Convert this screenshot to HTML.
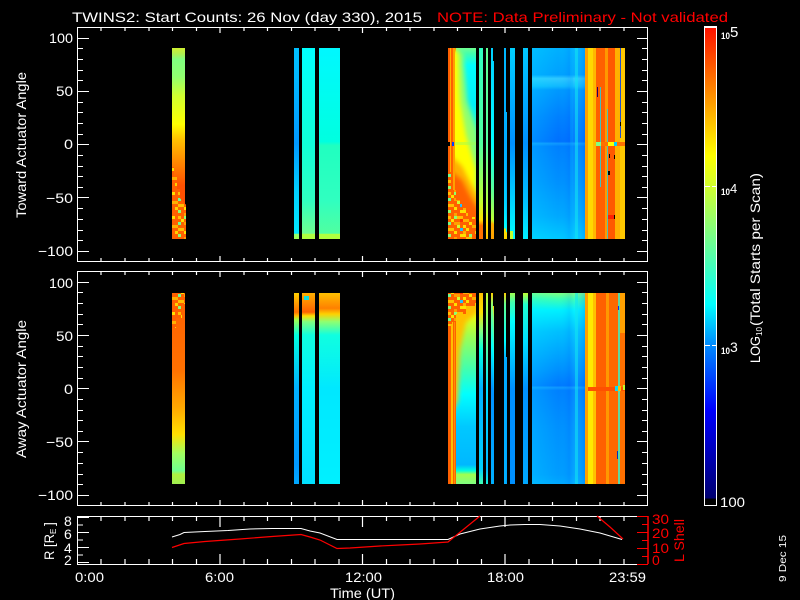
<!DOCTYPE html>
<html>
<head>
<meta charset="utf-8">
<style>
html,body{margin:0;padding:0;background:#000;width:800px;height:600px;overflow:hidden}
svg{display:block}
text{font-family:"Liberation Sans",sans-serif;fill:#fff}
.r{fill:#f00}
.d rect,.d polygon{shape-rendering:crispEdges}
</style>
</head>
<body>
<svg width="800" height="600" viewBox="0 0 800 600" xmlns="http://www.w3.org/2000/svg">
<defs>
<filter id="bl" x="-30%" y="-30%" width="160%" height="160%"><feGaussianBlur stdDeviation="2.5"/></filter>
<clipPath id="cp1"><rect x="455" y="48" width="21" height="191"/></clipPath>
<clipPath id="cp2"><rect x="455" y="293" width="21" height="191"/></clipPath>
<linearGradient id="cb" x1="0" y1="0" x2="0" y2="1">
<stop offset="0" stop-color="#ff1000"/><stop offset=".27" stop-color="#ffff00"/><stop offset=".335" stop-color="#d0ff30"/><stop offset=".58" stop-color="#00ffff"/><stop offset=".66" stop-color="#0090ff"/><stop offset=".8" stop-color="#0000ff"/><stop offset=".985" stop-color="#000070"/><stop offset=".986" stop-color="#000"/>
</linearGradient>
<linearGradient id="a1" x1="0" y1="0" x2="0" y2="1">
<stop offset="0" stop-color="#d0f030"/><stop offset=".03" stop-color="#b0f050"/><stop offset=".06" stop-color="#80ff80"/><stop offset=".15" stop-color="#90ff70"/><stop offset=".25" stop-color="#d0ff30"/><stop offset=".4" stop-color="#ffff00"/><stop offset=".48" stop-color="#ffc000"/><stop offset=".58" stop-color="#ff9000"/><stop offset=".72" stop-color="#ff5000"/><stop offset="1" stop-color="#ff5000"/>
</linearGradient>
<linearGradient id="a2" x1="0" y1="0" x2="0" y2="1">
<stop offset="0" stop-color="#ff6000"/><stop offset=".4" stop-color="#ff7000"/><stop offset=".6" stop-color="#ffa800"/><stop offset=".74" stop-color="#ffe000"/><stop offset=".84" stop-color="#a0ff60"/><stop offset=".93" stop-color="#70ff90"/><stop offset=".95" stop-color="#b0f040"/><stop offset="1" stop-color="#a0f050"/>
</linearGradient>
<linearGradient id="b1" x1="0" y1="0" x2="0" y2="1"><stop offset="0" stop-color="#00c0ff"/><stop offset=".15" stop-color="#00b8ff"/><stop offset=".5" stop-color="#0098ff"/><stop offset=".75" stop-color="#00d0ff"/><stop offset=".97" stop-color="#00e8ff"/><stop offset=".975" stop-color="#90ff70"/><stop offset="1" stop-color="#a0ff50"/></linearGradient>
<linearGradient id="b2" x1="0" y1="0" x2="0" y2="1"><stop offset="0" stop-color="#00ffff"/><stop offset=".5" stop-color="#10ffd8"/><stop offset=".8" stop-color="#30ffc0"/><stop offset=".97" stop-color="#70ff90"/><stop offset=".975" stop-color="#b0ff40"/><stop offset="1" stop-color="#b0ff40"/></linearGradient>
<linearGradient id="b3" x1="0" y1="0" x2="0" y2="1"><stop offset="0" stop-color="#00f8ff"/><stop offset=".49" stop-color="#00ffe0"/><stop offset=".51" stop-color="#20ffc0"/><stop offset=".8" stop-color="#30ffc0"/><stop offset=".97" stop-color="#50ffa0"/><stop offset=".975" stop-color="#b0ff40"/><stop offset="1" stop-color="#b0ff40"/></linearGradient>
<linearGradient id="c1" x1="0" y1="0" x2="0" y2="1"><stop offset="0" stop-color="#ffd000"/><stop offset=".1" stop-color="#ff7000"/><stop offset=".12" stop-color="#ffc000"/><stop offset=".14" stop-color="#a0ff50"/><stop offset=".22" stop-color="#00ffe0"/><stop offset=".5" stop-color="#00b0ff"/><stop offset=".9" stop-color="#0098ff"/><stop offset="1" stop-color="#00a8ff"/></linearGradient>
<linearGradient id="c2" x1="0" y1="0" x2="0" y2="1"><stop offset="0" stop-color="#ffb000"/><stop offset=".1" stop-color="#ff6000"/><stop offset=".12" stop-color="#ffe000"/><stop offset=".15" stop-color="#80ff80"/><stop offset=".22" stop-color="#10ffe0"/><stop offset=".5" stop-color="#00f0ff"/><stop offset="1" stop-color="#00e0ff"/></linearGradient>
<linearGradient id="c3" x1="0" y1="0" x2="0" y2="1"><stop offset="0" stop-color="#ffc000"/><stop offset=".08" stop-color="#ff8000"/><stop offset=".11" stop-color="#ffd000"/><stop offset=".15" stop-color="#90ff70"/><stop offset=".22" stop-color="#10ffe0"/><stop offset=".5" stop-color="#00e8ff"/><stop offset="1" stop-color="#00f0ff"/></linearGradient>

<linearGradient id="e1" x1="0" y1="0" x2="0" y2="1"><stop offset="0" stop-color="#70ff90"/><stop offset=".03" stop-color="#40ffb0"/><stop offset=".09" stop-color="#00ffff"/><stop offset=".3" stop-color="#00f0f8"/><stop offset=".45" stop-color="#40ffb0"/><stop offset=".7" stop-color="#a0ff50"/><stop offset="1" stop-color="#e0ff10"/></linearGradient>
<linearGradient id="e3" x1="0" y1="0" x2="0" y2="1"><stop offset="0" stop-color="#ff9000"/><stop offset=".09" stop-color="#ffff00"/><stop offset=".22" stop-color="#a0ff50"/><stop offset=".4" stop-color="#40ffb0"/><stop offset=".53" stop-color="#00ffff"/><stop offset=".7" stop-color="#00c8ff"/><stop offset=".9" stop-color="#00b8ff"/><stop offset=".93" stop-color="#00ffe0"/><stop offset=".95" stop-color="#a0ff50"/><stop offset="1" stop-color="#80ff80"/></linearGradient>

<linearGradient id="n1" x1="0" y1="0" x2="0" y2="1"><stop offset="0" stop-color="#30ffc0"/><stop offset=".5" stop-color="#50ffa0"/><stop offset=".8" stop-color="#c0ff30"/><stop offset=".9" stop-color="#ffe000"/><stop offset=".93" stop-color="#ff7000"/><stop offset="1" stop-color="#ff7000"/></linearGradient>
<linearGradient id="n2" x1="0" y1="0" x2="0" y2="1"><stop offset="0" stop-color="#60ff90"/><stop offset=".5" stop-color="#50ffa0"/><stop offset=".85" stop-color="#c0ff30"/><stop offset=".92" stop-color="#ffe000"/><stop offset="1" stop-color="#ffc000"/></linearGradient>
<linearGradient id="n3" x1="0" y1="0" x2="0" y2="1"><stop offset="0" stop-color="#00d0ff"/><stop offset=".5" stop-color="#00ffff"/><stop offset=".75" stop-color="#60ff90"/><stop offset=".9" stop-color="#c0ff30"/><stop offset=".92" stop-color="#ffb000"/><stop offset="1" stop-color="#ffa000"/></linearGradient>
<linearGradient id="n4" x1="0" y1="0" x2="0" y2="1"><stop offset="0" stop-color="#00b8ff"/><stop offset=".5" stop-color="#00a8ff"/><stop offset=".8" stop-color="#00d0ff"/><stop offset=".94" stop-color="#00ffff"/><stop offset=".95" stop-color="#ffe000"/><stop offset="1" stop-color="#ffd000"/></linearGradient>
<linearGradient id="n5" x1="0" y1="0" x2="0" y2="1"><stop offset="0" stop-color="#00d0ff"/><stop offset=".5" stop-color="#0090ff"/><stop offset="1" stop-color="#00ffff"/></linearGradient>
<linearGradient id="n6" x1="0" y1="0" x2="0" y2="1"><stop offset="0" stop-color="#00c8ff"/><stop offset=".5" stop-color="#0090ff"/><stop offset=".8" stop-color="#00c0ff"/><stop offset="1" stop-color="#00f0ff"/></linearGradient>

<linearGradient id="m1" x1="0" y1="0" x2="0" y2="1"><stop offset="0" stop-color="#ffc000"/><stop offset=".1" stop-color="#ffe000"/><stop offset=".2" stop-color="#80ff80"/><stop offset=".3" stop-color="#00ffe0"/><stop offset=".5" stop-color="#00b0ff"/><stop offset=".92" stop-color="#00d0ff"/><stop offset="1" stop-color="#40ffb0"/></linearGradient>
<linearGradient id="m2" x1="0" y1="0" x2="0" y2="1"><stop offset="0" stop-color="#c0ff30"/><stop offset=".25" stop-color="#60ff90"/><stop offset=".5" stop-color="#00e0ff"/><stop offset=".92" stop-color="#00b8ff"/><stop offset="1" stop-color="#10f0e0"/></linearGradient>
<linearGradient id="m3" x1="0" y1="0" x2="0" y2="1"><stop offset="0" stop-color="#ffd000"/><stop offset=".06" stop-color="#90ff70"/><stop offset=".28" stop-color="#00ffff"/><stop offset=".5" stop-color="#0090ff"/><stop offset="1" stop-color="#00b0ff"/></linearGradient>
<linearGradient id="m4" x1="0" y1="0" x2="0" y2="1"><stop offset="0" stop-color="#ffd000"/><stop offset=".06" stop-color="#60ff90"/><stop offset=".25" stop-color="#00ffff"/><stop offset=".35" stop-color="#00a8ff"/><stop offset="1" stop-color="#00b0ff"/></linearGradient>
<linearGradient id="m5" x1="0" y1="0" x2="0" y2="1"><stop offset="0" stop-color="#a0ff50"/><stop offset=".05" stop-color="#40ffb0"/><stop offset=".15" stop-color="#00ffff"/><stop offset=".5" stop-color="#0090ff"/><stop offset="1" stop-color="#0090ff"/></linearGradient>
<linearGradient id="m6" x1="0" y1="0" x2="0" y2="1"><stop offset="0" stop-color="#c0ff30"/><stop offset=".06" stop-color="#20ffd0"/><stop offset=".25" stop-color="#00e0ff"/><stop offset=".5" stop-color="#0090ff"/><stop offset="1" stop-color="#00a8ff"/></linearGradient>

<linearGradient id="f1" x1="0" y1="0" x2="0" y2="1">
<stop offset="0" stop-color="#00b0ff"/><stop offset=".14" stop-color="#00a0ff"/><stop offset=".16" stop-color="#30c8ff"/><stop offset=".2" stop-color="#10b8ff"/><stop offset=".22" stop-color="#0098ff"/><stop offset=".36" stop-color="#0080ff"/><stop offset=".49" stop-color="#0070ff"/><stop offset=".5" stop-color="#1098ff"/><stop offset=".515" stop-color="#0080ff"/><stop offset=".7" stop-color="#0090ff"/><stop offset=".88" stop-color="#00a8ff"/><stop offset="1" stop-color="#00c8ff"/>
</linearGradient>
<linearGradient id="f2" x1="0" y1="0" x2="0" y2="1">
<stop offset="0" stop-color="#80ff80"/><stop offset=".03" stop-color="#40ffb0"/><stop offset=".09" stop-color="#00f0ff"/><stop offset=".2" stop-color="#00c0ff"/><stop offset=".4" stop-color="#0090ff"/><stop offset=".485" stop-color="#0078ff"/><stop offset=".495" stop-color="#1098ff"/><stop offset=".51" stop-color="#0080ff"/><stop offset=".7" stop-color="#0090ff"/><stop offset=".95" stop-color="#009cff"/><stop offset="1" stop-color="#00a8ff"/>
</linearGradient>
<linearGradient id="h1" x1="0" y1="0" x2="1" y2="0"><stop offset="0" stop-color="#00ffff" stop-opacity=".2"/><stop offset=".5" stop-color="#00ffff" stop-opacity="0"/><stop offset=".7" stop-color="#0040ff" stop-opacity=".1"/><stop offset=".8" stop-color="#40ffff" stop-opacity=".1"/><stop offset="1" stop-color="#0060ff" stop-opacity=".25"/></linearGradient>

<pattern id="nz" x="448" y="0" width="30" height="24" patternUnits="userSpaceOnUse">
<rect width="30" height="24" fill="#ff6000"/>
<rect x="0" y="0" width="3" height="3" fill="#ffc000"/><rect x="6" y="0" width="3" height="3" fill="#90ff70"/><rect x="9" y="0" width="6" height="3" fill="#ffc000"/><rect x="24" y="0" width="3" height="3" fill="#ffe000"/>
<rect x="3" y="3" width="3" height="3" fill="#ffe000"/><rect x="12" y="3" width="3" height="3" fill="#ff3000"/><rect x="15" y="3" width="6" height="3" fill="#ffb000"/>
<rect x="0" y="6" width="3" height="3" fill="#70ff90"/><rect x="6" y="6" width="6" height="3" fill="#ffa000"/><rect x="21" y="6" width="3" height="3" fill="#ffe000"/>
<rect x="9" y="9" width="3" height="3" fill="#d0ff30"/><rect x="15" y="9" width="3" height="3" fill="#ffe000"/><rect x="24" y="9" width="6" height="3" fill="#ffb000"/>
<rect x="0" y="12" width="6" height="3" fill="#ffc000"/><rect x="12" y="12" width="3" height="3" fill="#20c0ff"/><rect x="18" y="12" width="3" height="3" fill="#ffe000"/>
<rect x="6" y="15" width="3" height="3" fill="#ffe000"/><rect x="15" y="15" width="3" height="3" fill="#ffb000"/><rect x="27" y="15" width="3" height="3" fill="#ffd000"/>
<rect x="0" y="18" width="3" height="3" fill="#90ff70"/><rect x="12" y="18" width="6" height="3" fill="#ffe000"/><rect x="21" y="18" width="3" height="3" fill="#90ff70"/>
<rect x="6" y="21" width="3" height="3" fill="#ffa000"/><rect x="18" y="21" width="6" height="3" fill="#ffc000"/>
</pattern>

<g id="ticks" fill="none" stroke="#fff" stroke-width="1">
<rect x="77.5" y=".5" width="570" height="234"/>
<path d="M78 11.5H89M78 64.5H89M78 117.5H89M78 170.5H89M78 224.5H89M78 21.5H83M78 32.5H83M78 43.5H83M78 53.5H83M78 75.5H83M78 85.5H83M78 96.5H83M78 107.5H83M78 128.5H83M78 139.5H83M78 149.5H83M78 160.5H83M78 181.5H83M78 192.5H83M78 203.5H83M78 213.5H83"/>
<path d="M637 11.5H648M637 64.5H648M637 117.5H648M637 170.5H648M637 224.5H648M642 21.5H648M642 32.5H648M642 43.5H648M642 53.5H648M642 75.5H648M642 85.5H648M642 96.5H648M642 107.5H648M642 128.5H648M642 139.5H648M642 149.5H648M642 160.5H648M642 181.5H648M642 192.5H648M642 203.5H648M642 213.5H648"/>
<path stroke-width="1.2" d="M101 1v3M125 1v3M149 1v3M172.500 1v3M196.500 1v3M220 1v5M244 1v3M267.500 1v3M291.500 1v3M315 1v3M339 1v3M362.500 1v5M386.500 1v3M410 1v3M434 1v3M457.500 1v3M481.500 1v3M505 1v5M529 1v3M552.500 1v3M576.500 1v3M600 1v3M624 1v3"/>
<path stroke-width="1.2" d="M101 234v-3M125 234v-3M149 234v-3M172.500 234v-3M196.500 234v-3M220 234v-5M244 234v-3M267.500 234v-3M291.500 234v-3M315 234v-3M339 234v-3M362.500 234v-5M386.500 234v-3M410 234v-3M434 234v-3M457.500 234v-3M481.500 234v-3M505 234v-5M529 234v-3M552.500 234v-3M576.500 234v-3M600 234v-3M624 234v-3"/>
</g>
</defs>

<rect width="800" height="600" fill="#000"/>

<!-- Panel 1 data -->
<g class="d">
<rect x="172" y="48" width="13" height="191" fill="url(#a1)"/>
<polygon points="172,167 174,167 174,177 177,177 177,189 180,189 180,198 186,205 186,239 172,239" fill="url(#nz)"/>
<rect x="294" y="48" width="5" height="191" fill="url(#b1)"/>
<rect x="302" y="48" width="13" height="191" fill="url(#b2)"/>
<rect x="319" y="48" width="21" height="191" fill="url(#b3)"/>

<rect x="448" y="48" width="8" height="191" fill="#ff6000"/>
<rect x="450" y="48" width="1" height="191" fill="#ffb000"/>
<rect x="453" y="48" width="2" height="191" fill="#ffa000"/>
<rect x="456" y="48" width="20" height="191" fill="url(#e1)"/>
<g clip-path="url(#cp1)">
<polygon points="450,52 463,52 467,100 476,130 480,190 450,190" fill="#90ff70" filter="url(#bl)"/>
<polygon points="450,50 458,50 460,100 466,135 476,170 476,200 450,190" fill="#ffff00" filter="url(#bl)"/>
<polygon points="450,155 462,166 470,182 480,200 480,240 450,240" fill="#ffb000" filter="url(#bl)"/>
<polygon points="450,170 462,180 470,196 480,212 480,240 450,240" fill="#ff6000" filter="url(#bl)"/>
</g>
<polygon points="448,172 451,172 451,190 456,190 456,200 462,200 462,208 468,208 468,217 476,217 476,239 448,239" fill="url(#nz)"/>
<rect x="448" y="142" width="2" height="4" fill="#000"/><rect x="452" y="142" width="2" height="4" fill="#0040ff"/>
<rect x="455" y="142" width="21" height="3" fill="#a0ff50" opacity=".5"/>

<rect x="479" y="48" width="4" height="191" fill="url(#n1)"/>
<rect x="486" y="48" width="2" height="191" fill="url(#n2)"/>
<rect x="491" y="48" width="2" height="191" fill="url(#n3)"/><rect x="493" y="61" width="1" height="178" fill="url(#n3)"/>
<rect x="504" y="48" width="2" height="191" fill="url(#n4)"/><rect x="506" y="112" width="1" height="127" fill="url(#n4)"/>
<rect x="510" y="48" width="5" height="191" fill="url(#n5)"/><rect x="510" y="231" width="3" height="8" fill="#c0ff30"/>
<rect x="523" y="48" width="5" height="191" fill="url(#n6)"/>

<rect x="532" y="48" width="53" height="191" fill="url(#f1)"/>
<rect x="532" y="48" width="53" height="191" fill="url(#h1)"/>
<rect x="570" y="48" width="3" height="191" fill="#00c0ff" opacity=".2"/>
<rect x="575" y="48" width="3" height="191" fill="#10e8f0" opacity=".55"/>

<rect x="585" y="48" width="3" height="191" fill="#ffa000"/>
<rect x="588" y="48" width="5" height="191" fill="#ffd800"/>
<rect x="593" y="48" width="3" height="191" fill="#ffb800"/>
<rect x="596" y="48" width="9" height="191" fill="#ff6000"/>
<rect x="605" y="48" width="3" height="191" fill="#ff9800"/>
<rect x="608" y="48" width="7" height="191" fill="#ff5800"/>
<rect x="615" y="48" width="5" height="191" fill="#ffb000"/>
<rect x="620" y="48" width="5" height="191" fill="#ffc800"/>
<rect x="600" y="87" width="1" height="100" fill="#40c0c0"/><rect x="607" y="109" width="1" height="130" fill="#50c0b0"/>
<rect x="597" y="87" width="1" height="10" fill="#200060"/><rect x="620" y="48" width="1" height="90" fill="#2050d0"/><rect x="620" y="122" width="1" height="4" fill="#000"/>
<rect x="596" y="142" width="29" height="4" fill="#ff7000"/><rect x="596" y="142" width="5" height="4" fill="#80ff80"/><rect x="608" y="142" width="6" height="4" fill="#ffff00"/><rect x="614" y="142" width="3" height="4" fill="#00d0ff"/>
<rect x="609" y="154" width="1" height="4" fill="#000"/><rect x="614" y="155" width="1" height="4" fill="#000"/><rect x="608" y="171" width="2" height="4" fill="#000"/><rect x="608" y="215" width="7" height="4" fill="#ff2000"/><rect x="614" y="215" width="1" height="4" fill="#000"/>
</g>

<!-- Panel 2 data -->
<g class="d">
<rect x="172" y="293" width="13" height="191" fill="url(#a2)"/>
<polygon points="172,293 185,293 185,304 182,304 182,318 176,318 176,328 172,328" fill="url(#nz)"/>
<rect x="294" y="293" width="5" height="191" fill="url(#c1)"/>
<rect x="302" y="293" width="13" height="191" fill="url(#c2)"/>
<rect x="319" y="293" width="21" height="191" fill="url(#c3)"/>
<rect x="304" y="296" width="5" height="4" fill="#10e0e0"/>

<rect x="456" y="293" width="20" height="191" fill="url(#e3)"/>
<g clip-path="url(#cp2)">
<polygon points="450,300 478,296 478,312 466,322 460,350 458,400 450,420" fill="#ffc000" filter="url(#bl)"/>
</g>
<rect x="448" y="293" width="8" height="191" fill="#ff6000"/>
<rect x="451" y="293" width="2" height="191" fill="#ffc000"/>
<rect x="454" y="293" width="1" height="191" fill="#ff9000"/>
<polygon points="448,293 476,293 476,306 466,306 466,314 456,314 456,322 452,322 452,326 448,326" fill="url(#nz)"/>

<rect x="479" y="293" width="4" height="191" fill="url(#m1)"/>
<rect x="486" y="293" width="2" height="191" fill="url(#m2)"/>
<rect x="491" y="293" width="2" height="191" fill="url(#m3)"/><rect x="493" y="306" width="1" height="178" fill="url(#m3)"/>
<rect x="504" y="293" width="2" height="191" fill="url(#m4)"/><rect x="506" y="357" width="1" height="127" fill="#00a8ff"/>
<rect x="510" y="293" width="5" height="191" fill="url(#m5)"/>
<rect x="523" y="293" width="5" height="191" fill="url(#m6)"/>

<rect x="532" y="293" width="53" height="191" fill="url(#f2)"/>
<rect x="532" y="293" width="53" height="191" fill="url(#h1)"/>
<rect x="575" y="293" width="3" height="191" fill="#10e8f0" opacity=".55"/>

<rect x="585" y="293" width="3" height="191" fill="#ffa000"/>
<rect x="588" y="293" width="5" height="191" fill="#ffe800"/>
<rect x="593" y="293" width="3" height="191" fill="#ffc000"/>
<rect x="596" y="293" width="10" height="191" fill="#ff6000"/>
<rect x="606" y="293" width="3" height="191" fill="#ff9800"/>
<rect x="609" y="293" width="9" height="191" fill="#ff6800"/>
<rect x="618" y="293" width="2" height="191" fill="#60d8a0"/>
<rect x="620" y="293" width="5" height="191" fill="#ff7000"/>
<rect x="620" y="293" width="5" height="40" fill="#ffa000"/>
<rect x="588" y="387" width="37" height="4" fill="#ff5000"/>
<rect x="615" y="386" width="3" height="5" fill="#00e0ff"/><rect x="618" y="386" width="3" height="5" fill="#ffc000"/><rect x="623" y="385" width="2" height="5" fill="#c0ff30"/>
<rect x="618" y="306" width="1" height="4" fill="#0030ff"/><rect x="617" y="451" width="1" height="8" fill="#0030c0"/>
</g>

<use href="#ticks" x="0" y="27"/>
<use href="#ticks" x="0" y="271"/>

<!-- Panel 3 -->
<g fill="none" stroke="#fff" stroke-width="1">
<path d="M648 516.500H77.500V564.500H648"/>
<path d="M78 517.500H89M78 532.500H89M78 547.500H89M78 562.500H89M78 525H83M78 540H83M78 555H83"/>
<path stroke-width="1.2" d="M101 517v4M125 517v4M149 517v4M172.500 517v4M196.500 517v4M220 517v10M244 517v4M267.500 517v4M291.500 517v4M315 517v4M339 517v4M362.500 517v10M386.500 517v4M410 517v4M434 517v4M457.500 517v4M481.500 517v4M505 517v10M529 517v4M552.500 517v4M576.500 517v4M600 517v4M624 517v4"/>
<path stroke-width="1.2" d="M101 564v-5M125 564v-5M149 564v-5M172.500 564v-5M196.500 564v-5M220 564v-10M244 564v-5M267.500 564v-5M291.500 564v-5M315 564v-5M339 564v-5M362.500 564v-10M386.500 564v-5M410 564v-5M434 564v-5M457.500 564v-5M481.500 564v-5M505 564v-10M529 564v-5M552.500 564v-5M576.500 564v-5M600 564v-5M624 564v-5"/>
<polyline points="172,537 180,534.500 184,532.500 205,531.500 228,530.500 250,529 272,528.500 301,528.500 310,531 320,533 337,539.500 448,539.500 460,534 480,529 500,526 510,525 525,524.500 540,524.500 560,526 580,529 600,533 622,539.500"/>
</g>
<g fill="none" stroke="#f00">
<polyline stroke-width="1.2" points="172,547.500 184,543.500 205,541.500 240,539 272,536.500 301,534.500 310,537 320,540 337,548.500 350,548 380,546 400,545 420,544 448,542 480,516"/>
<polyline stroke-width="1.2" points="597,516 610,527 623,539"/>
<path stroke-width="1.5" d="M648 516V564"/>
<path d="M637 516.500H648M637 532.500H648M637 548.500H648M637 564.500H648M642 524.500H648M642 540.500H648M642 556.500H648"/>
</g>

<!-- Colorbar -->
<rect x="704.500" y="26.500" width="12" height="479" fill="url(#cb)" stroke="#fff" stroke-width="1"/>
<rect x="704" y="26" width="13" height="2" fill="#fff"/>
<path d="M705 186.500h5M712 186.500h4M705 345.500h5M712 345.500h4" stroke="#fff" fill="none"/>

<!-- Text -->
<text x="72" y="22" font-size="14" textLength="350" lengthAdjust="spacingAndGlyphs">TWINS2: Start Counts: 26 Nov (day 330), 2015</text>
<text class="r" x="437" y="22" font-size="14" textLength="291" lengthAdjust="spacingAndGlyphs">NOTE: Data Preliminary - Not validated</text>

<g font-size="14">
<text x="49" y="43" textLength="24" lengthAdjust="spacingAndGlyphs">100</text>
<text x="56" y="96" textLength="17" lengthAdjust="spacingAndGlyphs">50</text>
<text x="64" y="149" textLength="9" lengthAdjust="spacingAndGlyphs">0</text>
<text x="46" y="203" textLength="27" lengthAdjust="spacingAndGlyphs">−50</text>
<text x="38" y="256" textLength="35" lengthAdjust="spacingAndGlyphs">−100</text>
<text x="49" y="288" textLength="24" lengthAdjust="spacingAndGlyphs">100</text>
<text x="56" y="341" textLength="17" lengthAdjust="spacingAndGlyphs">50</text>
<text x="64" y="394" textLength="9" lengthAdjust="spacingAndGlyphs">0</text>
<text x="46" y="447" textLength="27" lengthAdjust="spacingAndGlyphs">−50</text>
<text x="38" y="500" textLength="35" lengthAdjust="spacingAndGlyphs">−100</text>
<text x="64" y="526">8</text>
<text x="64" y="539">6</text>
<text x="64" y="553">4</text>
<text x="64" y="565">2</text>
<text class="r" x="652" y="524" textLength="17" lengthAdjust="spacingAndGlyphs">30</text>
<text class="r" x="652" y="538" textLength="17" lengthAdjust="spacingAndGlyphs">20</text>
<text class="r" x="652" y="553" textLength="17" lengthAdjust="spacingAndGlyphs">10</text>
<text class="r" x="652" y="565">0</text>
<text x="75" y="582" textLength="29" lengthAdjust="spacingAndGlyphs">0:00</text>
<text x="205" y="582" textLength="29" lengthAdjust="spacingAndGlyphs">6:00</text>
<text x="345" y="582" textLength="37" lengthAdjust="spacingAndGlyphs">12:00</text>
<text x="487" y="582" textLength="37" lengthAdjust="spacingAndGlyphs">18:00</text>
<text x="609" y="582" textLength="37" lengthAdjust="spacingAndGlyphs">23:59</text>
<text x="330" y="598" textLength="65" lengthAdjust="spacingAndGlyphs">Time (UT)</text>
<text transform="translate(26,218) rotate(-90)" textLength="146" lengthAdjust="spacingAndGlyphs">Toward Actuator Angle</text>
<text transform="translate(26,458) rotate(-90)" textLength="138" lengthAdjust="spacingAndGlyphs">Away Actuator Angle</text>
<text transform="translate(54,560) rotate(-90)" textLength="26" lengthAdjust="spacingAndGlyphs">R [R</text>
<text transform="translate(56,534) rotate(-90)" font-size="8">E</text>
<text transform="translate(54,526) rotate(-90)">]</text>
<text class="r" transform="translate(684,562) rotate(-90)" textLength="43" lengthAdjust="spacingAndGlyphs">L Shell</text>
</g>
<text transform="translate(786,582) rotate(-90)" font-size="10" textLength="47" lengthAdjust="spacingAndGlyphs">9 Dec 15</text>

<g>
<text x="721" y="39" font-size="9" font-weight="bold" textLength="9" lengthAdjust="spacingAndGlyphs">10</text>
<text x="730" y="37" font-size="15">5</text>
<text x="721" y="195" font-size="9" font-weight="bold" textLength="9" lengthAdjust="spacingAndGlyphs">10</text>
<text x="730" y="193" font-size="13">4</text>
<text x="721" y="354" font-size="9" font-weight="bold" textLength="9" lengthAdjust="spacingAndGlyphs">10</text>
<text x="730" y="352" font-size="14">3</text>
<text x="720" y="507" font-size="14" textLength="25" lengthAdjust="spacingAndGlyphs">100</text>
</g>
<text transform="translate(760,363) rotate(-90)" font-size="14" textLength="27" lengthAdjust="spacingAndGlyphs">LOG</text>
<text transform="translate(762,336) rotate(-90)" font-size="8" textLength="9" lengthAdjust="spacingAndGlyphs">10</text>
<text transform="translate(760,326) rotate(-90)" font-size="14" textLength="153" lengthAdjust="spacingAndGlyphs">(Total Starts per Scan)</text>
</svg>
</body>
</html>
